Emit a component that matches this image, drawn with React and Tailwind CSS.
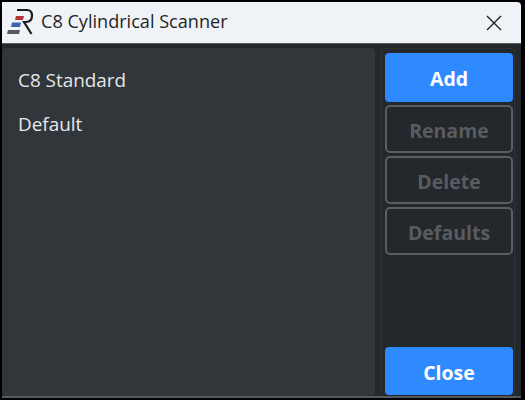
export default function App() {
  const solid = "rounded-[4px] bg-[#2f89ff] text-white font-bold text-[19.5px] pt-[3px]";
  const ghost = "h-[48px] rounded-[5px] border-2 border-[#5a5e62] text-[#585c60] font-bold text-[19.5px] pt-[4px]";
  return (
    <div className="w-[525px] h-[400px] bg-black pt-[2px] pl-[2px] pr-[4px] pb-[2px] flex flex-col font-['Open_Sans','Noto_Sans',sans-serif]">
      <div className="h-[42px] shrink-0 bg-[#eff3f8] flex items-center border-b border-[#5a5f63] rounded-tr-[4px]">
        <svg className="ml-[3px]" width="30" height="30" viewBox="5 6 30 30">
          <path d="M16 14 L24 14 L23 18 L15 18 Z" fill="#b5343a" />
          <path d="M12 20.5 L21 20.5 L20 25 L11 25 Z" fill="#3d62b0" />
          <path d="M8 28 L20 28 L19 32 L7 32 Z" fill="#55585c" />
          <path d="M17 8 H27 Q32 8 32 13.5 Q32 20 26 20 L24 20 L31.5 32" fill="none" stroke="#1c1c1c" strokeWidth="2.2" />
        </svg>
        <span className="ml-[6px] text-[18.1px] text-[#1f1f1f] mb-[2px]">C8 Cylindrical Scanner</span>
        <svg className="ml-auto mr-[19px]" width="16" height="16" viewBox="0 0 16 16">
          <path d="M1 1 L15 15 M15 1 L1 15" stroke="#222" strokeWidth="1.4" fill="none" />
        </svg>
      </div>
      <div className="flex-1 flex bg-[#24272b] min-h-0 border-b-2 border-[#55595d]">
        <div className="w-[373px] shrink-0 bg-[#31363a] rounded-[4px] pt-[10px] pl-[16px] text-[18.9px] text-[#e6e8ea] mt-[4px]">
          <div className="h-[44px] flex items-center">C8 Standard</div>
          <div className="h-[44px] flex items-center">Default</div>
        </div>
        <div className="ml-[6px] mt-[4px] w-[134px] shrink-0 flex flex-col border-x border-t border-[#2e3236] rounded-t-[4px] pl-[3px] pr-[1px] pt-[4px] pb-[1px] gap-[3px]">
          <button className={`h-[49px] ${solid}`}>Add</button>
          <button className={ghost}>Rename</button>
          <button className={ghost}>Delete</button>
          <button className={ghost}>Defaults</button>
          <button className={`mt-auto h-[48px] ${solid}`}>Close</button>
        </div>
      </div>
    </div>
  );
}
